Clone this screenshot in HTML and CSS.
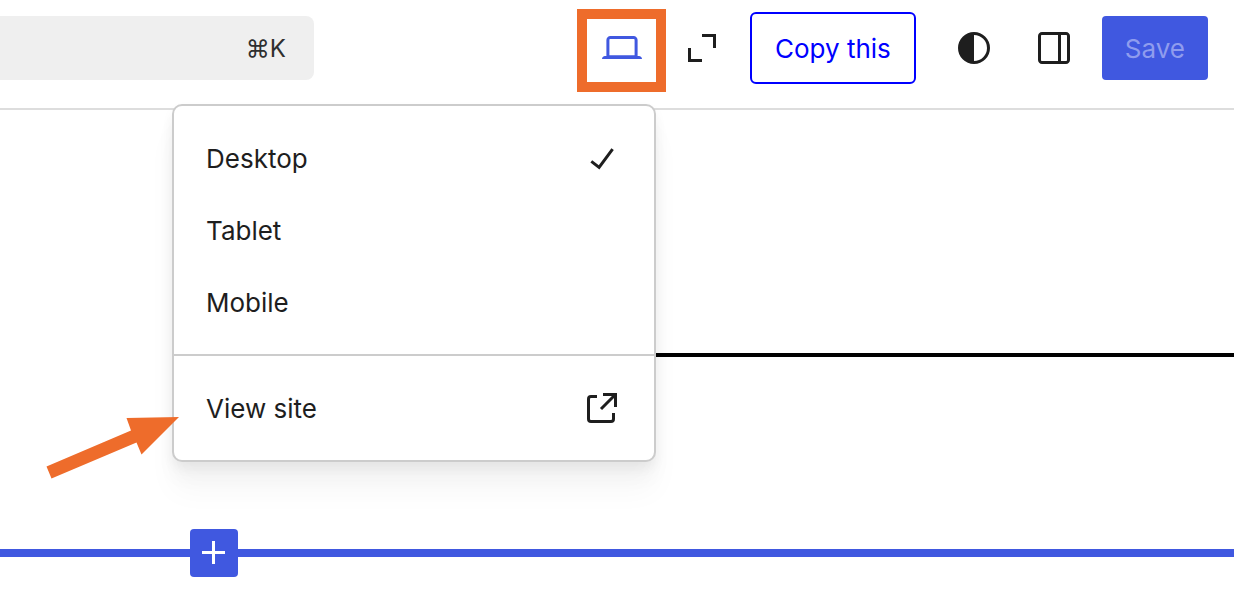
FILE: index.html
```html
<!DOCTYPE html>
<html lang="en">
<head>
  <meta charset="UTF-8" />
  <meta name="viewport" content="width=device-width, initial-scale=1" />
  <title>Site Editor</title>
  <link rel="stylesheet" href="styles.css">
</head>
<body>

  <header class="toolbar">
    <button class="command-bar" type="button" aria-label="Open command palette"><kbd>⌘K</kbd></button>

    <div class="actions">
      <div class="view-dropdown">
        <button class="icon-button active" type="button" aria-label="View" aria-expanded="true">
          <svg viewBox="0 0 24 24"><path d="M20.5 16h-.7V8c0-1.1-.9-2-2-2H6.2c-1.1 0-2 .9-2 2v8h-.7c-.8 0-1.5.7-1.5 1.5h20c0-.8-.7-1.5-1.5-1.5zM5.7 8c0-.3.2-.5.5-.5h11.6c.3 0 .5.2.5.5v7.6H5.7V8z"/></svg>
        </button>
        <span class="highlight"></span>

        <div class="menu">
          <div class="menu-group">
            <button class="menu-item" type="button">
              <span class="label">Desktop</span>
              <svg viewBox="0 0 24 24"><path d="M16.7 7.1l-6.3 8.5-3.3-2.5-.9 1.2 4.5 3.4L17.9 8z"/></svg>
            </button>
            <button class="menu-item" type="button"><span class="label">Tablet</span></button>
            <button class="menu-item" type="button"><span class="label">Mobile</span></button>
          </div>
          <div class="menu-group">
            <a class="menu-item" href="#">
              <span class="label">View site</span>
              <svg viewBox="0 0 24 24"><path d="M19.5 4.5h-7V6h4.44l-5.97 5.97 1.06 1.06L18 7.06v4.44h1.5v-7Zm-13 1a2 2 0 0 0-2 2v10a2 2 0 0 0 2 2h10a2 2 0 0 0 2-2v-3H17v3a.5.5 0 0 1-.5.5h-10a.5.5 0 0 1-.5-.5v-10a.5.5 0 0 1 .5-.5h3V5.5h-3Z"/></svg>
            </a>
          </div>
          <svg class="arrow" viewBox="0 0 140 70"><path d="M135 3 82.500 4 87 16.500 2.500 52.500 7.500 64.500 92.500 28.500 97.500 40.500Z"/></svg>
        </div>
      </div>

      <button class="icon-button" type="button" aria-label="Fullscreen">
        <svg viewBox="0 0 24 24"><path d="M12 5v1.5h5.5V12H19V5h-7Zm0 14v-1.5H6.500V12H5v7h7Z"/></svg>
      </button>
      <button class="copy-button" type="button"><span class="label">Copy this</span></button>
      <button class="icon-button" type="button" aria-label="Styles">
        <svg viewBox="0 0 24 24"><path fill-rule="evenodd" d="M20 12a8 8 0 1 1-16 0 8 8 0 0 1 16 0Zm-1.5 0a6.5 6.5 0 0 1-6.5 6.5v-13a6.5 6.5 0 0 1 6.5 6.5Z"/></svg>
      </button>
      <button class="icon-button" type="button" aria-label="Settings">
        <svg viewBox="0 0 24 24"><path d="M18 4H6c-1.1 0-2 .9-2 2v12c0 1.1.9 2 2 2h12c1.1 0 2-.9 2-2V6c0-1.1-.9-2-2-2zm-4 14.5H6c-.3 0-.5-.2-.5-.5V6c0-.3.2-.5.5-.5h8v13zm4.5-.5c0 .3-.2.5-.5.5h-2.5v-13H18c.3 0 .5.2.5.5v12z"/></svg>
      </button>
      <button class="save-button" type="button" disabled><span class="label">Save</span></button>
    </div>
  </header>

  <main class="canvas">
    <hr class="separator">
    <div class="inserter">
      <button class="add-block" type="button" aria-label="Add block">
        <svg viewBox="0 0 24 24"><path d="M11 12.5V17.500H12.500V12.500H17.500V11H12.500V6H11V11H6V12.500H11Z"/></svg>
      </button>
    </div>
  </main>

</body>
</html>
```
FILE: styles.css
```css
* {
  box-sizing: border-box;
  margin: 0;
  padding: 0;
}

body {
  font-family: Inter, "Liberation Sans", sans-serif;
  font-size: 26px;
  line-height: 32px;
  color: #1e1e1e;
  background: #fff;
}

button {
  font: inherit;
  color: inherit;
  background: none;
  border: none;
  cursor: pointer;
}

svg {
  display: block;
  width: 48px;
  height: 48px;
  fill: currentColor;
}

.label {
  display: block;
  padding-top: 2px;
}

/* Top toolbar */
.toolbar {
  display: flex;
  align-items: center;
  justify-content: space-between;
  padding: 12px 26px 24px 0;
  border-bottom: 2px solid #ddd;
}

.command-bar {
  width: 314px;
  height: 64px;
  padding-right: 28px;
  text-align: right;
  color: #2f2f2f;
  background: #efefef;
  border-radius: 0 8px 8px 0;
}

.command-bar kbd {
  font-family: inherit;
  font-size: 24px;
}

.actions {
  display: flex;
  align-items: center;
  gap: 16px;
}

.icon-button {
  padding: 8px;
}

.icon-button.active {
  color: #4058e0;
}

.copy-button {
  height: 72px;
  padding: 0 23px;
  margin-right: 10px;
  color: #00f;
  border: 2px solid #00f;
  border-radius: 6px;
}

.save-button {
  height: 64px;
  padding: 0 23px;
  color: #8f9cee;
  background: #4058e0;
  border-radius: 4px;
}

/* View dropdown */
.view-dropdown {
  position: relative;
}

.highlight {
  position: absolute;
  inset: -7px -12px -12px -13px;
  border: 10px solid #ee6c2b;
  pointer-events: none;
}

.menu {
  position: absolute;
  top: 88px;
  right: -2px;
  width: 484px;
  background: #fff;
  border: 2px solid #ccc;
  border-radius: 10px;
  box-shadow: 0 30px 30px rgba(0, 0, 0, 0.03), 0 16px 20px rgba(0, 0, 0, 0.03), 0 6px 12px rgba(0, 0, 0, 0.05);
}

.menu-group {
  padding: 16px 12px 16px 16px;
}

.menu-group + .menu-group {
  border-top: 2px solid #ccc;
}

.menu-item {
  display: flex;
  align-items: center;
  justify-content: space-between;
  width: 100%;
  height: 72px;
  padding: 0 16px;
  color: inherit;
  text-decoration: none;
}

.arrow {
  position: absolute;
  left: -130px;
  bottom: -24px;
  width: 140px;
  height: 70px;
  fill: #ee6c2b;
}

/* Page canvas */
.canvas {
  padding-top: 243px;
}

.separator {
  height: 4px;
  margin-left: 190px;
  background: #000;
  border: none;
}

.inserter {
  display: flex;
  margin-top: 172px;
  padding-left: 190px;
  background: linear-gradient(#4058e0, #4058e0) center / 100% 8px no-repeat;
}

.add-block {
  color: #fff;
  background: #4058e0;
  border-radius: 4px;
}
```
